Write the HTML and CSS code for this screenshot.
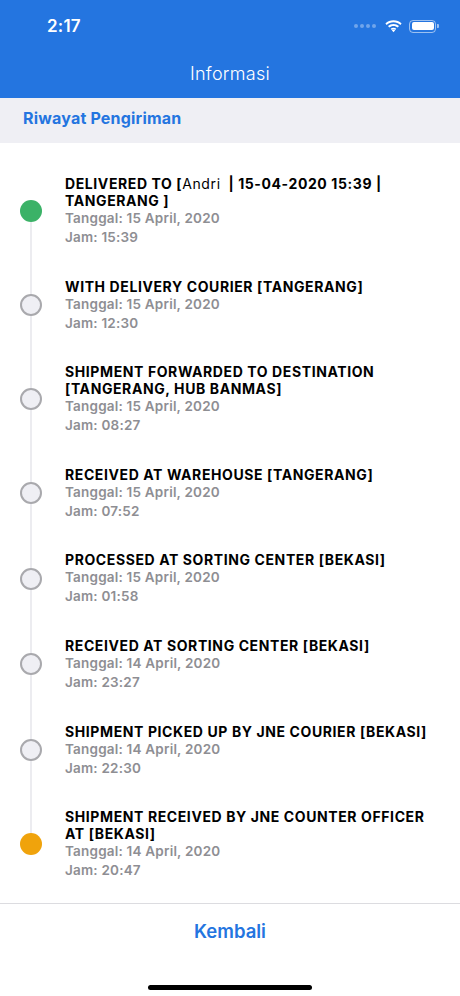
FILE: index.html
```html
<!DOCTYPE html>
<html lang="id">
<head>
<meta charset="utf-8">
<title>Informasi</title>
<link rel="stylesheet" href="styles.css">
</head>
<body>
<div class="screen">
  <header class="header">
    <div class="status">
      <span class="time">2:17</span>
      <div class="status-icons">
        <span class="signal"><i></i><i></i><i></i><i></i></span>
        <svg class="wifi" width="17" height="13" viewBox="0 0 17 13">
          <path d="M8.5 2.2c2.6 0 5 1 6.8 2.7l1.3-1.4C14.5 1.5 11.6.3 8.5.3S2.5 1.5.4 3.5l1.3 1.4C3.5 3.2 5.9 2.2 8.5 2.2z" fill="#fff"/>
          <path d="M8.5 5.9c1.6 0 3.1.6 4.2 1.6l1.3-1.4C12.5 4.8 10.6 4 8.5 4S4.5 4.8 3 6.1l1.3 1.4c1.1-1 2.6-1.6 4.2-1.6z" fill="#fff"/>
          <path d="M8.5 9.5c.7 0 1.3.3 1.7.7l-1.7 2-1.7-2c.4-.4 1-.7 1.7-.7z" fill="#fff"/>
          <path d="M8.5 7.7c1.1 0 2.1.4 2.8 1.1L10.2 10c-.5-.4-1.1-.7-1.7-.7s-1.2.3-1.7.7L5.7 8.8c.7-.7 1.7-1.1 2.8-1.1z" fill="#fff"/>
        </svg>
        <span class="battery"><span class="battery-fill"></span></span>
      </div>
    </div>
    <div class="nav"><h1 class="nav-title">Informasi</h1></div>
  </header>

  <div class="section-head">Riwayat Pengiriman</div>

  <main class="timeline">
    <div class="item">
      <div class="dot-col"><span class="dot dot-green"></span></div>
      <div class="text">
        <div class="title">DELIVERED TO [<span class="normal">Andri</span>&nbsp; | 15-04-2020 15:39 | TANGERANG ]</div>
        <div class="sub">Tanggal: 15 April, 2020</div>
        <div class="sub">Jam: 15:39</div>
      </div>
    </div>
    <div class="item">
      <div class="dot-col"><span class="dot"></span></div>
      <div class="text">
        <div class="title">WITH DELIVERY COURIER [TANGERANG]</div>
        <div class="sub">Tanggal: 15 April, 2020</div>
        <div class="sub">Jam: 12:30</div>
      </div>
    </div>
    <div class="item">
      <div class="dot-col"><span class="dot"></span></div>
      <div class="text">
        <div class="title">SHIPMENT FORWARDED TO DESTINATION [TANGERANG, HUB BANMAS]</div>
        <div class="sub">Tanggal: 15 April, 2020</div>
        <div class="sub">Jam: 08:27</div>
      </div>
    </div>
    <div class="item">
      <div class="dot-col"><span class="dot"></span></div>
      <div class="text">
        <div class="title">RECEIVED AT WAREHOUSE [TANGERANG]</div>
        <div class="sub">Tanggal: 15 April, 2020</div>
        <div class="sub">Jam: 07:52</div>
      </div>
    </div>
    <div class="item">
      <div class="dot-col"><span class="dot"></span></div>
      <div class="text">
        <div class="title">PROCESSED AT SORTING CENTER [BEKASI]</div>
        <div class="sub">Tanggal: 15 April, 2020</div>
        <div class="sub">Jam: 01:58</div>
      </div>
    </div>
    <div class="item">
      <div class="dot-col"><span class="dot"></span></div>
      <div class="text">
        <div class="title">RECEIVED AT SORTING CENTER [BEKASI]</div>
        <div class="sub">Tanggal: 14 April, 2020</div>
        <div class="sub">Jam: 23:27</div>
      </div>
    </div>
    <div class="item">
      <div class="dot-col"><span class="dot"></span></div>
      <div class="text">
        <div class="title">SHIPMENT PICKED UP BY JNE COURIER [BEKASI]</div>
        <div class="sub">Tanggal: 14 April, 2020</div>
        <div class="sub">Jam: 22:30</div>
      </div>
    </div>
    <div class="item">
      <div class="dot-col"><span class="dot dot-orange"></span></div>
      <div class="text">
        <div class="title">SHIPMENT RECEIVED BY JNE COUNTER OFFICER AT [BEKASI]</div>
        <div class="sub">Tanggal: 14 April, 2020</div>
        <div class="sub">Jam: 20:47</div>
      </div>
    </div>
  </main>

  <footer class="footer">
    <button class="back">Kembali</button>
    <div class="home-bar"></div>
  </footer>
</div>
</body>
</html>
```
FILE: styles.css
```css
* { box-sizing: border-box; }
html, body { margin: 0; padding: 0; background: #fff; }
body { font-family: Inter, "Liberation Sans", sans-serif; }
.screen { width: 460px; height: 996px; display: flex; flex-direction: column; overflow: hidden; }

.header { background: #2475e0; color: #fff; height: 98px; display: flex; flex-direction: column; }
.status { height: 50px; display: flex; align-items: center; justify-content: space-between; padding: 2px 24px 0 47px; }
.time { font-size: 17px; font-weight: 600; letter-spacing: 0.2px; }
.status-icons { display: flex; align-items: center; gap: 7px; }
.signal { display: flex; gap: 2px; margin-right: 2px; }
.signal i { width: 4px; height: 4px; border-radius: 2px; background: rgba(255,255,255,0.35); display: block; }
.wifi { display: block; }
.battery { width: 27px; height: 13px; border: 1.2px solid rgba(255,255,255,0.55); border-radius: 4px; padding: 1.5px; position: relative; display: block; }
.battery::after { content: ""; position: absolute; right: -3.5px; top: 3.5px; width: 2px; height: 4px; background: rgba(255,255,255,0.55); border-radius: 0 1px 1px 0; }
.battery-fill { display: block; width: 100%; height: 100%; background: #fff; border-radius: 2px; }
.nav { height: 48px; display: flex; align-items: center; justify-content: center; padding-bottom: 2px; }
.nav-title { margin: 0; font-size: 18px; font-weight: 300; letter-spacing: 0.3px; }

.section-head { background: #efeff4; height: 45px; display: flex; align-items: center; padding: 0 0 5px 23px; color: #2475e0; font-weight: 700; font-size: 16px; letter-spacing: 0.2px; }

.timeline { position: relative; padding-top: 32px; display: flex; flex-direction: column; gap: 30.6px; flex: 1; }
.timeline::before { content: ""; position: absolute; left: 30px; top: 66px; bottom: 60px; width: 2px; background: #ececf0; }
.item { display: flex; align-items: center; position: relative; }
.dot-col { width: 65px; flex: none; display: flex; padding-left: 20px; }
.dot { width: 22px; height: 22px; border-radius: 50%; background: #efeff4; border: 2px solid #a9a9ad; display: block; }
.dot-green { background: #3bb267; border: none; }
.dot-orange { background: #f0a30c; border: none; }
.text { flex: 1; padding-right: 22px; }
.title { font-size: 14px; font-weight: 700; line-height: 17px; color: #000; letter-spacing: 0.6px; }
.title .normal { font-weight: 400; }
.sub { font-size: 13.5px; font-weight: 600; line-height: 19px; color: #8e8e93; letter-spacing: 0.2px; }

.footer { height: 93px; border-top: 1px solid #dcdce0; display: flex; flex-direction: column; align-items: center; }
.back { margin-top: 14px; border: none; background: none; color: #2475e0; font-family: inherit; font-size: 18.5px; font-weight: 600; padding: 0; height: 26px; }
.home-bar { margin-top: 41px; width: 164px; height: 5px; border-radius: 3px; background: #000; }
```
